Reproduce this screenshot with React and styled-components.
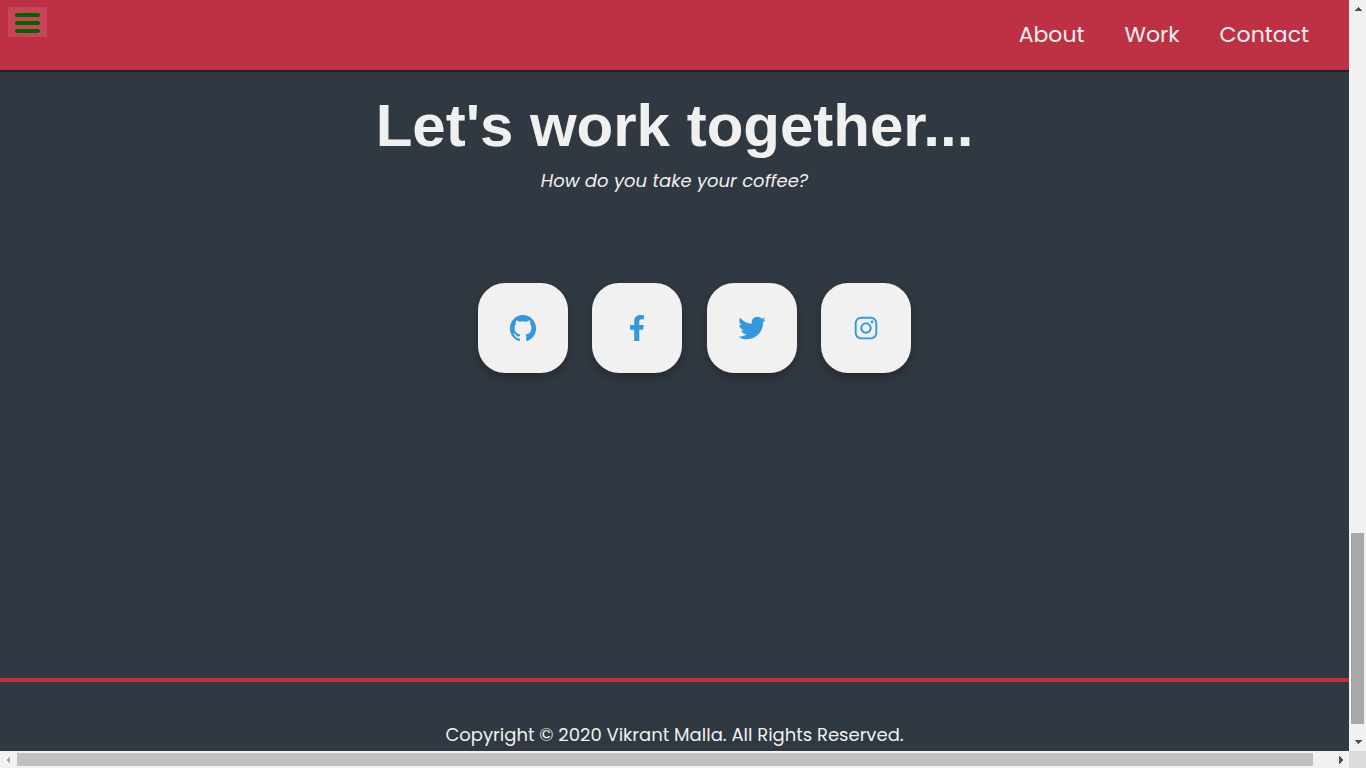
import React from "react";
import styled, { createGlobalStyle } from "styled-components";
import { IoLogoGithub, IoLogoTwitter, IoLogoInstagram } from "react-icons/io";
import { FaFacebookF } from "react-icons/fa";

const GlobalStyle = createGlobalStyle`
  *, *::before, *::after { box-sizing: border-box; }
  body {
    margin: 0;
    background: #303841;
    color: #f0f0f0;
    font-family: Poppins, Inter, sans-serif;
  }
`;

const Frame = styled.div`
  display: grid;
  grid-template-columns: minmax(0, 1fr) 17px;
  grid-template-rows: minmax(0, 1fr) 17px;
  height: 100vh;
`;

const Page = styled.div`
  display: flex;
  flex-direction: column;
  overflow: hidden;
`;

const Header = styled.header`
  display: flex;
  justify-content: space-between;
  align-items: flex-start;
  height: 72px;
  flex: none;
  padding: 7px 40px 0 8px;
  background: #be3144;
  border-bottom: 2px solid #1d2128;
`;

const MenuButton = styled.button`
  display: flex;
  flex-direction: column;
  gap: 4px;
  width: 39px;
  height: 30px;
  padding: 6px 7px 0;
  border: 0;
  background: rgba(255, 255, 255, 0.1);
  cursor: pointer;
`;

const MenuBar = styled.span`
  height: 4px;
  border-radius: 2px;
  background: #006400;
`;

const Nav = styled.nav`
  display: flex;
  gap: 40px;
  padding-top: 13px;
`;

const NavLink = styled.a`
  color: #f0f0f0;
  font-size: 22px;
  font-weight: 400;
  line-height: 30px;
  text-decoration: none;
`;

const Contact = styled.main`
  display: flex;
  flex: 1;
  flex-direction: column;
  align-items: center;
  padding-top: 18px;
`;

const Title = styled.h1`
  margin: 0;
  font-family: "Liberation Sans", Arial, sans-serif;
  font-size: 60px;
  font-weight: 700;
  line-height: 72px;
`;

const Tagline = styled.p`
  margin: 4px 0 87px;
  font-size: 18px;
  font-style: italic;
  line-height: 30px;
`;

const SocialList = styled.ul`
  display: flex;
  justify-content: space-between;
  width: 473px;
  max-width: 100%;
  margin: 0;
  padding: 0 0 0 40px;
  list-style: none;
`;

const SocialLink = styled.a`
  display: flex;
  align-items: center;
  justify-content: center;
  width: 90px;
  height: 90px;
  border-radius: 27px;
  background: #f1f1f1;
  box-shadow: 0 5px 15px -5px rgba(0, 0, 0, 0.5);
  color: #3498db;
  font-size: ${(p) => p.$size}px;
`;

const Footer = styled.footer`
  flex: none;
  height: 73px;
  padding-top: 38px;
  border-top: 4px solid #be3144;
  text-align: center;
`;

const Copyright = styled.p`
  margin: 0;
  font-size: 18px;
  line-height: 30px;
`;

const Scrollbar = styled.div`
  display: flex;
  flex-direction: ${(p) => (p.$vertical ? "column" : "row")};
  justify-content: space-between;
  background: #f1f1f1;
`;

const ScrollEnd = styled.span`
  display: flex;
  flex: none;
  align-items: center;
  justify-content: center;
  width: 17px;
  height: 17px;
  color: ${(p) => (p.$muted ? "#a3a3a3" : "#505050")};
`;

const Track = styled.div`
  display: flex;
  flex: 1;
  flex-direction: ${(p) => (p.$vertical ? "column" : "row")};
  padding: ${(p) => (p.$vertical ? "0 2px" : "2px 0")};
`;

const Thumb = styled.span`
  flex: ${(p) => p.$share};
  background: ${(p) => p.$color};
`;

const TrackSpace = styled.span`
  flex: ${(p) => p.$share};
`;

const Corner = styled.div`
  background: #dcdcdc;
`;

const arrows = {
  up: "M4 2 8 6H0z",
  down: "M0 1h8L4 5z",
  left: "M5 0v8L1 4z",
  right: "M2 0l4 4-4 4z",
};

function Arrow({ direction, muted }) {
  return (
    <ScrollEnd $muted={muted}>
      <svg width="8" height="8" viewBox="0 0 8 8" shapeRendering="crispEdges" aria-hidden="true">
        <path d={arrows[direction]} fill="currentColor" />
      </svg>
    </ScrollEnd>
  );
}

const socials = [
  { name: "GitHub", Icon: IoLogoGithub, size: 30 },
  { name: "Facebook", Icon: FaFacebookF, size: 26 },
  { name: "Twitter", Icon: IoLogoTwitter, size: 30 },
  { name: "Instagram", Icon: IoLogoInstagram, size: 30 },
];

export default function App() {
  return (
    <>
      <GlobalStyle />
      <Frame>
        <Page>
          <Header>
            <MenuButton type="button" aria-label="Menu">
              <MenuBar />
              <MenuBar />
              <MenuBar />
            </MenuButton>
            <Nav>
              <NavLink href="#about">About</NavLink>
              <NavLink href="#work">Work</NavLink>
              <NavLink href="#contact">Contact</NavLink>
            </Nav>
          </Header>
          <Contact id="contact">
            <Title>Let's work together...</Title>
            <Tagline>How do you take your coffee?</Tagline>
            <SocialList>
              {socials.map(({ name, Icon, size }) => (
                <li key={name}>
                  <SocialLink href={`#${name.toLowerCase()}`} aria-label={name} $size={size}>
                    <Icon />
                  </SocialLink>
                </li>
              ))}
            </SocialList>
          </Contact>
          <Footer>
            <Copyright>Copyright © 2020 Vikrant Malla. All Rights Reserved.</Copyright>
          </Footer>
        </Page>
        <Scrollbar $vertical aria-hidden="true">
          <Arrow direction="up" />
          <Track $vertical>
            <TrackSpace $share={516} />
            <Thumb $share={191} $color="#a8a8a8" />
            <TrackSpace $share={10} />
          </Track>
          <Arrow direction="down" />
        </Scrollbar>
        <Scrollbar aria-hidden="true">
          <Arrow direction="left" muted />
          <Track>
            <Thumb $share={1296} $color="#c1c1c1" />
            <TrackSpace $share={19} />
          </Track>
          <Arrow direction="right" />
        </Scrollbar>
        <Corner />
      </Frame>
    </>
  );
}
